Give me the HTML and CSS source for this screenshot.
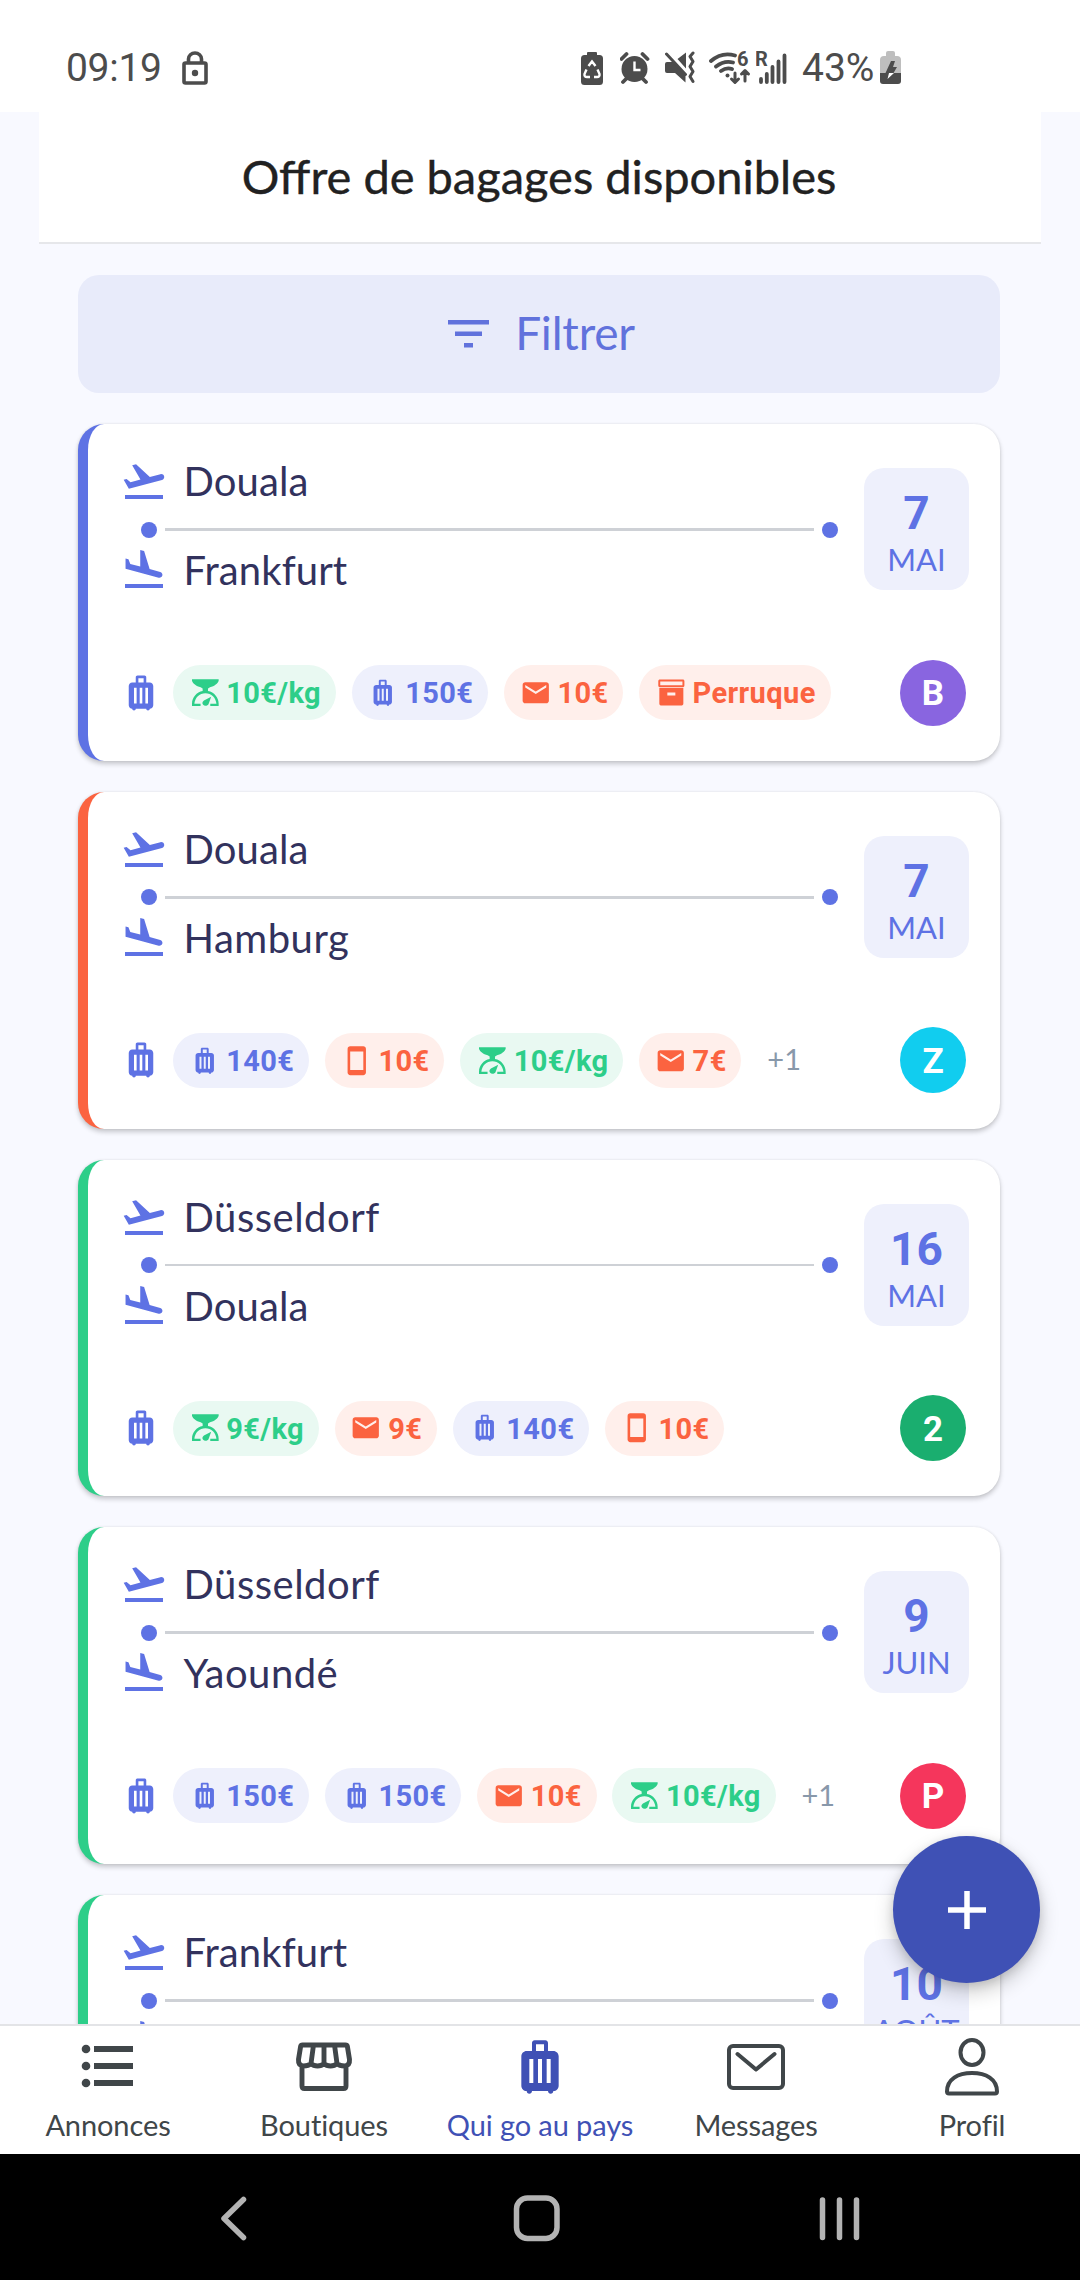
FILE: index.html
```html
<!DOCTYPE html>
<html lang="fr">
<head>
<meta charset="utf-8">
<title>Offre de bagages disponibles</title>
<link rel="stylesheet" href="styles.css">
</head>
<body>
<svg class="sprite" aria-hidden="true">
  <symbol id="takeoff" viewBox="0 0 24 24"><path d="M2.5 19h19v2h-19zM22.07 9.64c-.21-.8-1.04-1.28-1.84-1.06L14.92 10l-6.9-6.43-1.93.51 4.14 7.17-4.97 1.33-1.97-1.54-1.45.39 2.59 4.49L21 11.49c.81-.23 1.28-1.05 1.07-1.85z"/></symbol>
  <symbol id="landing" viewBox="0 0 24 24"><path d="M2.5 19h19v2h-19zM19.34 15.85c.8.21 1.62-.26 1.84-1.06.21-.8-.26-1.62-1.06-1.84l-5.31-1.42-2.76-9.02L10.12 2v8.28L5.15 8.95l-.93-2.32-1.45-.39v5.17l16.57 4.44z"/></symbol>
  <symbol id="luggage" viewBox="0 0 24 24"><path d="M17 6h-2V3c0-.55-.45-1-1-1h-4c-.55 0-1 .45-1 1v3H7c-1.100 0-2 .9-2 2v11c0 1.100.9 2 2 2 0 .55.45 1 1 1s1-.45 1-1h6c0 .55.45 1 1 1s1-.45 1-1c1.100 0 2-.9 2-2V8c0-1.100-.9-2-2-2zM9.500 18H8V9h1.500v9zm3.250 0h-1.500V9h1.500v9zm.75-12h-3V3.500h3V6zM16 18h-1.500V9H16v9z"/></symbol>
  <symbol id="mail" viewBox="0 0 24 24"><path d="M20 4H4c-1.100 0-1.990.9-1.990 2L2 18c0 1.100.9 2 2 2h16c1.100 0 2-.9 2-2V6c0-1.100-.9-2-2-2zm0 4l-8 5-8-5V6l8 5 8-5v2z"/></symbol>
  <symbol id="phone" viewBox="0 0 24 24"><path d="M17 1.010L7 1c-1.100 0-1.990.9-1.990 2v18c0 1.100.89 2 1.990 2h10c1.100 0 2-.9 2-2V3c0-1.100-.9-1.990-2-1.990zM17 19H7V5h10v14z"/></symbol>
  <symbol id="scale" viewBox="0 0 24 24"><path d="M2.300 1.700h20.300v1.200c-.5 2-3.200 4.200-6.600 4.900l-1.500 1v1.900c4.600.9 8.100 4.800 8.100 9.600V22h-6.400v-1.600h4.700c-.3-4.600-3.900-8.100-8.400-8.100s-8.100 3.500-8.400 8.100h4.700V22H2.300v-1.700c0-4.800 3.500-8.700 8.100-9.600V8.800l-1.500-1C5.500 7.100 2.800 4.900 2.300 2.900z"/><path d="M16.900 15l-1.900 5.300c-.6 1.800-3.200 2-4.200.9s-.6-2.500.6-3.300z"/></symbol>
  <symbol id="archive" viewBox="0 0 24 24"><path fill-rule="evenodd" d="M3.700 1.900h17.500c.7 0 1.200.5 1.200 1.200v3.300c0 .7-.5 1.200-1.200 1.200H3.700c-.7 0-1.200-.5-1.200-1.200V3.100c0-.7.5-1.200 1.200-1.200zM4 3.400V6.200h16.900V3.400zM3.300 8.200h18.300v11.900c0 1-.7 1.700-1.700 1.700H5c-1 0-1.700-.7-1.700-1.700zM9.400 11.800V14h6.100v-2.200z"/></symbol>
</svg>

<div class="screen">
  <header class="status">
    <span class="status-text clock">09:19</span>
    <svg class="lock" width="26" height="34" viewBox="0 0 26 34"><rect x="2" y="12" width="22" height="20" rx="1.500"/><path d="M6.500 12V8a6.500 6 0 0 1 13 0v4"/><circle cx="13" cy="22" r="3.200"/></svg>
    <div class="indicators">
      <svg class="saver" width="24" height="36" viewBox="580 52 24 36"><path d="M587 57v-2q0-1 1-1h8q1 0 1 1v2h2.500q3.500 0 3.500 3.500v23q0 3.500-3.500 3.500h-15q-3.500 0-3.500-3.500v-23q0-3.500 3.500-3.500z"/><g class="knock"><path d="M588.500 68l3.500-4.500 3.500 4.500M586.500 71.500l-2 4.500q-.5 3 2.500 3h3M597.500 71.500l2 4.500q.5 3-2.500 3h-3"/></g></svg>
      <svg class="alarm" width="30" height="34" viewBox="620 54 30 34"><circle cx="634.500" cy="72" r="13"/><path class="ln" d="M621.500 62l5-5M647.500 62l-5-5M626 82l-3 3M643 82l3 3"/><path class="knock" d="M634.500 64.500V73h6"/></svg>
      <svg class="mute" width="30" height="34" viewBox="665 54 30 34"><path d="M667 65h6l12.500 13v7.500L675 76h-8q-2 0-2-2v-7q0-2 2-2zM686 55.500v16L677.500 62z"/><path class="ln thin" d="M666.500 57l19 20.500M693 56l-3 3.500 3 5-3 5 3 5-3 5 3 5"/></svg>
      <svg class="wifi" width="42" height="36" viewBox="709 52 42 36"><path class="ln" d="M711 63q11-9.500 24-5.500M716 68.500q8.500-6.500 17-4M721 73q5.500-4 11-2"/><circle cx="727.500" cy="77.500" r="2"/><path class="ln thin" d="M735 75v9M731.500 81l3.500 3.500 3.500-3.500M745 83v-10M741.500 76l3.500-3.500 3.500 3.500"/><text x="737" y="68">6</text></svg>
      <svg class="signal" width="32" height="34" viewBox="756 52 32 34"><text x="755" y="67">R</text><path class="ln" d="M761 80v3M766.800 75v8M772.500 68v15M778.500 62.500v20.500M784.500 56.500v26.500"/></svg>
      <span class="status-text percent">43%</span>
      <svg width="21" height="34" viewBox="880 53 21 34"><path class="dim" d="M880 75V62q0-4 4-4h2v-3q0-2 2-2h5q2 0 2 2v3h2q4 0 4 4v13z"/><path d="M880 75h21v8q0 3-3 3h-15q-3 0-3-3z"/><path d="M891 63h4l-2 6h4l-3.500 6h-8z"/><path class="bolt" d="M887 75h7l-6.500 6 1.500-6z"/></svg>
    </div>
  </header>

  <main class="page">
    <h1 class="title">Offre de bagages disponibles</h1>
    <button class="filter"><svg width="41" height="28" viewBox="0 0 41 28"><path d="M0 0h41v4.600H0zM7 11.500h27v4.600H7zM16 23h9v4.600h-9z"/></svg><span>Filtrer</span></button>

    <div class="offers">
      <article class="card blue">
        <div class="top">
          <div class="route">
            <div class="stop"><svg><use href="#takeoff"/></svg><span>Douala</span></div>
            <div class="track"><i></i><b></b><i></i></div>
            <div class="stop"><svg><use href="#landing"/></svg><span>Frankfurt</span></div>
          </div>
          <div class="date"><strong>7</strong><span>MAI</span></div>
        </div>
        <div class="foot">
          <svg class="bag"><use href="#luggage"/></svg>
          <div class="chips">
            <span class="chip green"><svg><use href="#scale"/></svg><span>10€/kg</span></span>
            <span class="chip indigo"><svg><use href="#luggage"/></svg><span>150€</span></span>
            <span class="chip orange"><svg><use href="#mail"/></svg><span>10€</span></span>
            <span class="chip orange"><svg><use href="#archive"/></svg><span>Perruque</span></span>
          </div>
          <span class="avatar violet">B</span>
        </div>
      </article>

      <article class="card red">
        <div class="top">
          <div class="route">
            <div class="stop"><svg><use href="#takeoff"/></svg><span>Douala</span></div>
            <div class="track"><i></i><b></b><i></i></div>
            <div class="stop long"><svg><use href="#landing"/></svg><span>Hamburg</span></div>
          </div>
          <div class="date"><strong>7</strong><span>MAI</span></div>
        </div>
        <div class="foot">
          <svg class="bag"><use href="#luggage"/></svg>
          <div class="chips">
            <span class="chip indigo"><svg><use href="#luggage"/></svg><span>140€</span></span>
            <span class="chip orange"><svg><use href="#phone"/></svg><span>10€</span></span>
            <span class="chip green"><svg><use href="#scale"/></svg><span>10€/kg</span></span>
            <span class="chip orange"><svg><use href="#mail"/></svg><span>7€</span></span>
            <span class="more">+1</span>
          </div>
          <span class="avatar cyan">Z</span>
        </div>
      </article>

      <article class="card mint">
        <div class="top">
          <div class="route">
            <div class="stop long"><svg><use href="#takeoff"/></svg><span>Düsseldorf</span></div>
            <div class="track"><i></i><b></b><i></i></div>
            <div class="stop"><svg><use href="#landing"/></svg><span>Douala</span></div>
          </div>
          <div class="date"><strong>16</strong><span>MAI</span></div>
        </div>
        <div class="foot">
          <svg class="bag"><use href="#luggage"/></svg>
          <div class="chips">
            <span class="chip green"><svg><use href="#scale"/></svg><span>9€/kg</span></span>
            <span class="chip orange"><svg><use href="#mail"/></svg><span>9€</span></span>
            <span class="chip indigo"><svg><use href="#luggage"/></svg><span>140€</span></span>
            <span class="chip orange"><svg><use href="#phone"/></svg><span>10€</span></span>
          </div>
          <span class="avatar emerald">2</span>
        </div>
      </article>

      <article class="card mint">
        <div class="top">
          <div class="route">
            <div class="stop long"><svg><use href="#takeoff"/></svg><span>Düsseldorf</span></div>
            <div class="track"><i></i><b></b><i></i></div>
            <div class="stop long"><svg><use href="#landing"/></svg><span>Yaoundé</span></div>
          </div>
          <div class="date"><strong>9</strong><span>JUIN</span></div>
        </div>
        <div class="foot">
          <svg class="bag"><use href="#luggage"/></svg>
          <div class="chips">
            <span class="chip indigo"><svg><use href="#luggage"/></svg><span>150€</span></span>
            <span class="chip indigo"><svg><use href="#luggage"/></svg><span>150€</span></span>
            <span class="chip orange"><svg><use href="#mail"/></svg><span>10€</span></span>
            <span class="chip green"><svg><use href="#scale"/></svg><span>10€/kg</span></span>
            <span class="more">+1</span>
          </div>
          <span class="avatar pink">P</span>
        </div>
      </article>

      <article class="card mint">
        <div class="top">
          <div class="route">
            <div class="stop"><svg><use href="#takeoff"/></svg><span>Frankfurt</span></div>
            <div class="track"><i></i><b></b><i></i></div>
            <div class="stop"><svg><use href="#landing"/></svg></div>
          </div>
          <div class="date"><strong>10</strong><span>AOÛT</span></div>
        </div>
      </article>
    </div>
    <button class="fab" aria-label="Ajouter"><svg width="38" height="38" viewBox="0 0 38 38"><path d="M0 19h38M19 0v38"/></svg></button>
  </main>

  <nav class="tabs">
    <a class="tab"><svg width="60" height="60" viewBox="0 0 60 60"><g fill="currentColor"><circle cx="8" cy="12" r="4.300"/><circle cx="8" cy="29" r="4.300"/><circle cx="8" cy="46" r="4.300"/><path d="M16 9h39v6H16zM16 26h39v6H16zM16 43h39v6H16z"/></g></svg><span>Annonces</span></a>
    <a class="tab"><svg width="60" height="60" viewBox="0 0 60 60"><path stroke-width="4.900" d="M8.500 8H51.500Q53 8 53.400 9.500L55.500 22.500Q56 28.500 50.500 29 45.500 29 43 26.500 40.500 29 36.500 29 32.500 29 30 26.500 27.500 29 23.500 29 19.500 29 17 26.500 14.500 29 9.500 29 4 28.500 4.500 22.500L6.600 9.500Q7 8 8.500 8zM8 29V49Q8 51.500 10.500 51.500H49.500Q52 51.500 52 49V29M19.500 8L17 26.500M30 8V26.500M40.500 8L43 26.500"/></svg><span>Boutiques</span></a>
    <a class="tab active"><svg width="64" height="64" viewBox="0 0 24 24"><use href="#luggage"/></svg><span>Qui go au pays</span></a>
    <a class="tab"><svg width="60" height="60" viewBox="0 0 60 60"><g stroke-width="4"><rect x="3" y="9" width="54" height="42" rx="4"/><path d="M11.500 17L30 32.500 48.500 17"/></g></svg><span>Messages</span></a>
    <a class="tab"><svg width="60" height="60" viewBox="0 0 60 60"><g stroke-width="4"><ellipse cx="30" cy="15.500" rx="11.500" ry="12.500"/><path d="M5 54.500C5 42 16 36 30 36s25 6 25 18.500q0 2-2 2H7q-2 0-2-2z"/></g></svg><span>Profil</span></a>
  </nav>

  <footer class="system">
    <svg width="30" height="48" viewBox="218 2194 30 48"><path d="M243.500 2199.500L224 2218.500l19.500 19"/></svg>
    <svg class="home" width="48" height="48" viewBox="513 2194 48 48"><rect x="516.500" y="2198" width="40.500" height="40.500" rx="11"/></svg>
    <svg width="44" height="48" viewBox="817 2194 44 48"><path d="M822.500 2200v37.500M839.500 2200v37.500M856.500 2200v37.500"/></svg>
  </footer>
</div>
</body>
</html>
```
FILE: styles.css
```css
* { box-sizing: border-box; }
body { margin: 0; background: #f8f9ff; font-family: Lato, "Noto Sans", sans-serif; }
h1, button { margin: 0; padding: 0; border: 0; font: inherit; }
svg { display: block; flex: none; }
.sprite { position: absolute; width: 0; height: 0; }
.screen { display: flex; flex-direction: column; width: 1080px; height: 2280px; overflow: hidden; }

.status { flex: none; display: flex; align-items: center; height: 112px; padding: 24px 179px 0 66px; background: #fff; color: #4c4c4c; }
.status-text { font: 39px/46px Roboto, sans-serif; white-space: nowrap; }
.clock { width: 116px; letter-spacing: -.3px; }
.lock { fill: none; stroke: #4c4c4c; stroke-width: 3.600; }
.lock circle { fill: #4c4c4c; stroke: none; }
.indicators { display: flex; align-items: center; margin-left: auto; fill: #4c4c4c; }
.saver { margin-right: 16px; }
.alarm { margin-right: 15px; }
.mute, .signal { margin-right: 14px; }
.wifi { margin-right: 5px; }
.indicators text { font: bold 20px Roboto, sans-serif; }
.ln { fill: none; stroke: #4c4c4c; stroke-width: 3.800; stroke-linecap: round; stroke-linejoin: round; }
.thin { stroke-width: 3; }
.knock { fill: none; stroke: #fff; stroke-width: 2.400; }
.dim { fill: #bebebe; }
.bolt { fill: #fff; }
.percent { width: 78px; }

.page { position: relative; flex: none; display: flex; flex-direction: column; height: 1912px; padding: 0 39px; overflow: hidden; }
.title { flex: none; display: flex; align-items: center; justify-content: center; height: 132px; padding: 0 2px 3px 0; background: #fff; border-bottom: 2px solid #e6e7ea; color: #212121; font-size: 47px; line-height: 56px; font-weight: 400; -webkit-text-stroke: .4px; }
.filter { flex: none; display: flex; align-items: center; justify-content: center; gap: 26px; height: 118px; margin: 31px 41px 0 39px; padding-left: 5px; border-radius: 21px; background: #e8ebfa; color: #6172dc; font-size: 46px; letter-spacing: -.2px; }
.filter svg { fill: currentColor; }
.filter span { margin-top: -3px; }
.offers { display: flex; flex-direction: column; gap: 31px; margin: 31px 41px 0 39px; }

.card { flex: none; height: 336.750px; padding: 33px 31px 0 31.500px; border-left: 10.500px solid; border-radius: 26px; background: #fff; box-shadow: 0 3px 5px rgba(0, 0, 0, .2), 0 0 3px rgba(0, 0, 0, .08); }
.blue { border-color: #5e72e4; }
.red { border-color: #fb6340; }
.mint { border-color: #2dce89; }
.top { display: flex; justify-content: space-between; }
.route { width: 718px; }
.stop { display: flex; align-items: center; gap: 16px; height: 48px; color: #32325d; font-size: 40px; letter-spacing: .1px; }
.long { letter-spacing: .5px; }
.stop svg { width: 48px; height: 48px; fill: #5e72e4; }
.track { display: flex; align-items: center; gap: 8px; height: 41px; padding: 8px 0 0 21px; }
.track i { width: 16px; height: 16px; border-radius: 50%; background: #5e72e4; }
.track b { flex: 1; height: 2.600px; background: #ced1d6; }
.date { display: flex; flex-direction: column; align-items: center; width: 105px; height: 122px; margin-top: 11px; padding-top: 18px; border-radius: 20px; background: #eef0fc; color: #5e72e4; }
.date strong { font: bold 46px/54px Roboto, sans-serif; }
.date span { font-size: 31px; line-height: 39px; }
.foot { display: flex; align-items: center; height: 66px; margin-top: 65.500px; }
.bag { width: 42px; height: 42px; fill: #5e72e4; }
.chips { display: flex; align-items: center; gap: 15.850px; margin-left: 11.300px; }
.chip { display: flex; align-items: center; gap: 6.200px; height: 55px; padding: 0 14.800px 0 15.750px; border-radius: 28px; font: bold 29px/34px Roboto, sans-serif; letter-spacing: .4px; white-space: nowrap; }
.chip span { margin-top: 1px; }
.chip svg { width: 31.500px; height: 31.500px; fill: currentColor; }
.green { color: #2dce89; background: #e9f9f2; }
.indigo { color: #5e72e4; background: #eef0fc; }
.orange { color: #fb6340; background: #ffefeb; }
.more { margin: -3px 0 0 10px; color: #8898aa; font-size: 29px; }
.avatar { display: grid; place-items: center; width: 66px; height: 66px; margin: 0 3px 0 auto; padding-top: 3px; border-radius: 50%; color: #fff; font: bold 35px/40px Roboto, sans-serif; }
.violet { background: #8965e0; }
.cyan { background: #11cdef; }
.emerald { background: #1aae6f; }
.pink { background: #f5365c; }

.fab { position: absolute; right: 40px; bottom: 41px; display: grid; place-items: center; width: 147px; height: 147px; border-radius: 50%; background: #3f51b5; box-shadow: 0 9px 20px rgba(0, 0, 0, .2), 0 3px 10px rgba(0, 0, 0, .12); }
.fab svg { stroke: #fff; stroke-width: 5.500; }

.tabs { flex: none; display: grid; grid-template-columns: repeat(5, 1fr); height: 130px; border-top: 2px solid #e3e4e7; background: #fff; color: #404649; }
.tab { display: flex; flex-direction: column; align-items: center; font-size: 29px; line-height: 34px; letter-spacing: -.1px; white-space: nowrap; }
.tab svg { margin-top: 11px; margin-bottom: 11px; fill: none; stroke: currentColor; stroke-linecap: round; stroke-linejoin: round; }
.tab g[fill] { stroke: none; }
.tabs .active { color: #3f51b5; }
.tabs .active svg { margin: 9px 0; fill: currentColor; stroke: none; }

.system { flex: none; display: flex; align-items: center; justify-content: space-between; height: 126px; padding: 2px 219px 0 218px; background: #000; }
.system svg { fill: none; stroke: #b3b3b3; stroke-width: 5.500; stroke-linecap: round; stroke-linejoin: round; }
.system .home { margin-left: 9px; }
```
